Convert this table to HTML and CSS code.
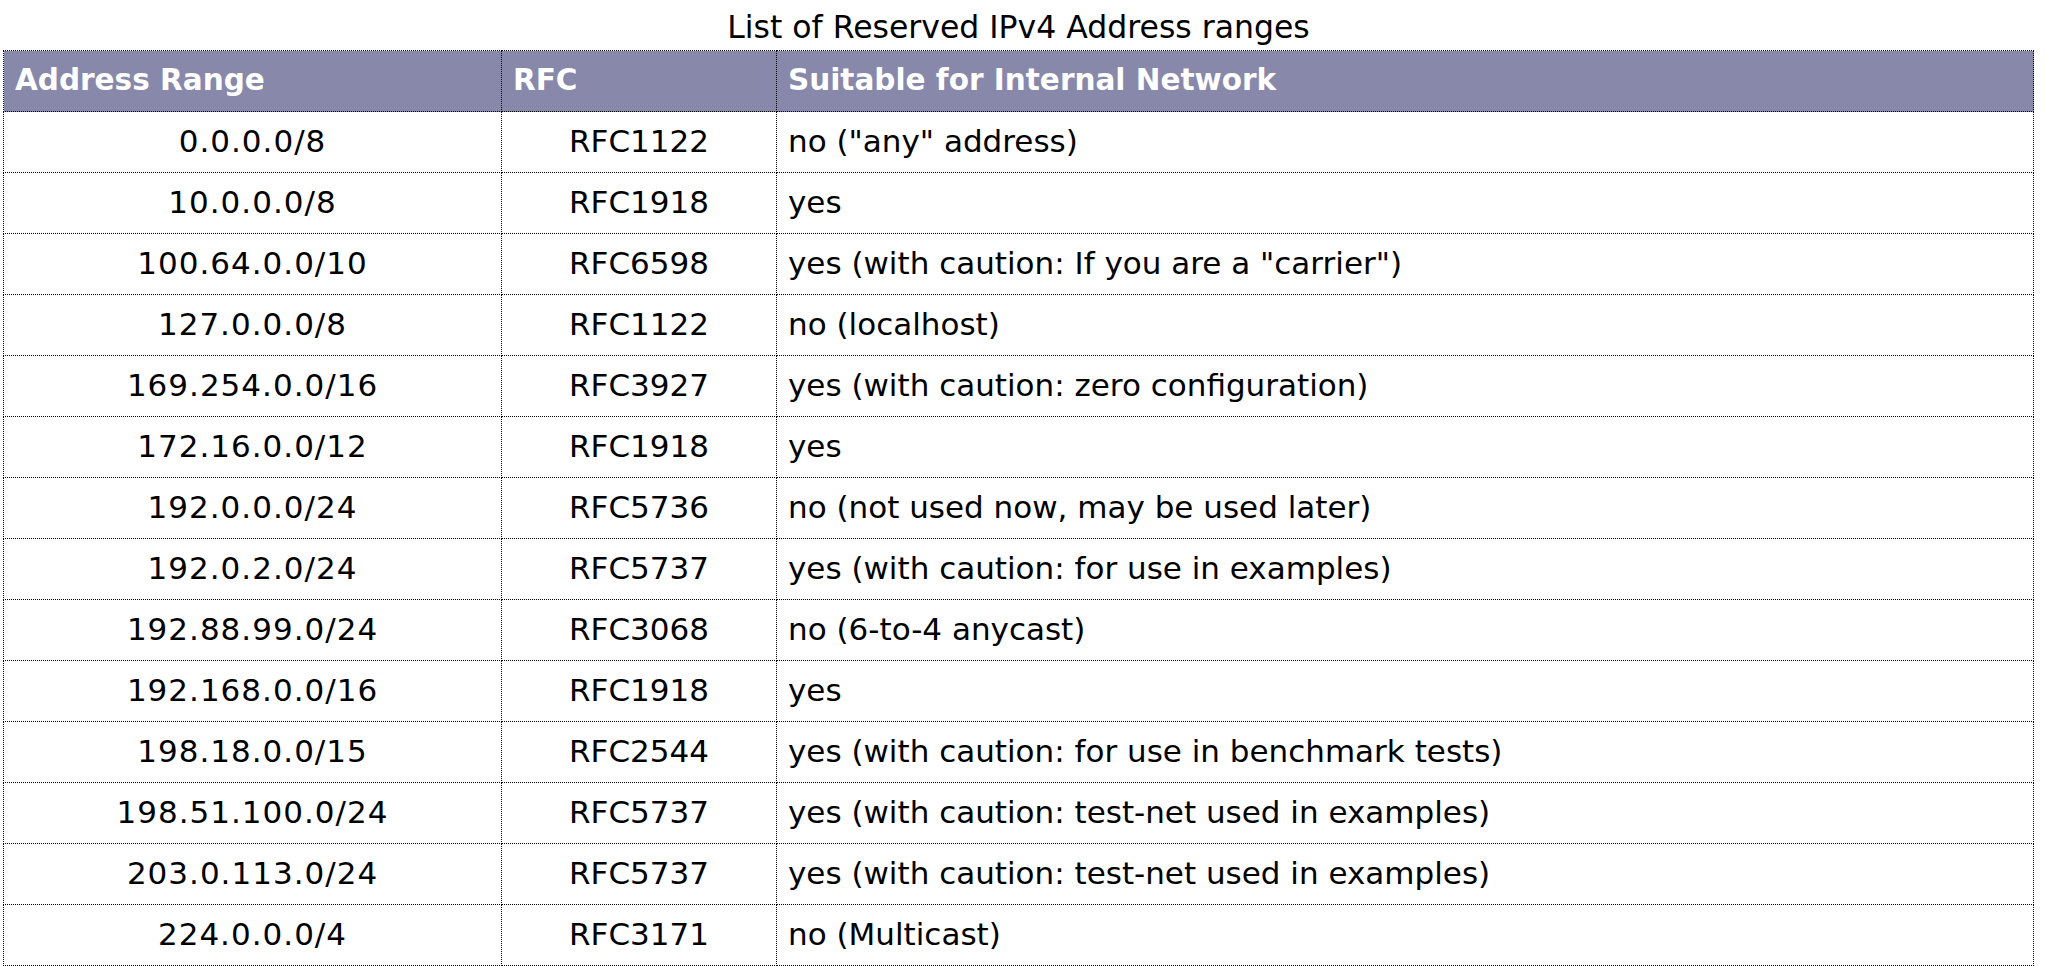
FILE: index.html
```html
<!DOCTYPE html>
<html>
<head>
<meta charset="utf-8">
<title>List of Reserved IPv4 Address ranges</title>
<link rel="stylesheet" href="styles.css">
</head>
<body>
<div class="wrap">
<table class="ranges">
<caption class="caption">List of Reserved IPv4 Address ranges</caption>
<thead>
<tr><th class="c1">Address Range</th><th class="c2">RFC</th><th class="c3">Suitable for Internal Network</th></tr>
</thead>
<tbody>
<tr><td class="addr">0.0.0.0/8</td><td class="rfc">RFC1122</td><td>no ("any" address)</td></tr>
<tr><td class="addr">10.0.0.0/8</td><td class="rfc">RFC1918</td><td>yes</td></tr>
<tr><td class="addr">100.64.0.0/10</td><td class="rfc">RFC6598</td><td>yes (with caution: If you are a "carrier")</td></tr>
<tr><td class="addr">127.0.0.0/8</td><td class="rfc">RFC1122</td><td>no (localhost)</td></tr>
<tr><td class="addr">169.254.0.0/16</td><td class="rfc">RFC3927</td><td>yes (with caution: zero configuration)</td></tr>
<tr><td class="addr">172.16.0.0/12</td><td class="rfc">RFC1918</td><td>yes</td></tr>
<tr><td class="addr">192.0.0.0/24</td><td class="rfc">RFC5736</td><td>no (not used now, may be used later)</td></tr>
<tr><td class="addr">192.0.2.0/24</td><td class="rfc">RFC5737</td><td>yes (with caution: for use in examples)</td></tr>
<tr><td class="addr">192.88.99.0/24</td><td class="rfc">RFC3068</td><td>no (6-to-4 anycast)</td></tr>
<tr><td class="addr">192.168.0.0/16</td><td class="rfc">RFC1918</td><td>yes</td></tr>
<tr><td class="addr">198.18.0.0/15</td><td class="rfc">RFC2544</td><td>yes (with caution: for use in benchmark tests)</td></tr>
<tr><td class="addr">198.51.100.0/24</td><td class="rfc">RFC5737</td><td>yes (with caution: test-net used in examples)</td></tr>
<tr><td class="addr">203.0.113.0/24</td><td class="rfc">RFC5737</td><td>yes (with caution: test-net used in examples)</td></tr>
<tr><td class="addr">224.0.0.0/4</td><td class="rfc">RFC3171</td><td>no (Multicast)</td></tr>
</tbody>
</table>
</div>
</body>
</html>
```
FILE: styles.css
```css
html, body {
  margin: 0;
  padding: 0;
  background: #ffffff;
}
body {
  font-family: "DejaVu Sans", "Liberation Sans", sans-serif;
  color: #000000;
}
.wrap {
  padding-left: 3px;
}
.ranges {
  width: 2031px;
  border-collapse: collapse;
  table-layout: fixed;
  font-size: 31px;
}
.caption {
  height: 46px;
  padding-top: 4px;
  line-height: 46px;
  font-size: 31.5px;
  text-align: center;
  caption-side: top;
}
.ranges th,
.ranges td {
  border: 1px dotted #000000;
  height: 60px;
  padding: 0 11px;
  vertical-align: middle;
  line-height: 1.2;
}
.ranges th {
  background: #8888aa;
  color: #ffffff;
  font-weight: bold;
  font-size: 29.5px;
  text-align: left;
}
.c1 { width: 475px; }
.c2 { width: 252px; }
.c3 { width: auto; }
.ranges td.addr {
  text-align: center;
  letter-spacing: 1px;
}
.ranges td.rfc {
  text-align: center;
}
```
